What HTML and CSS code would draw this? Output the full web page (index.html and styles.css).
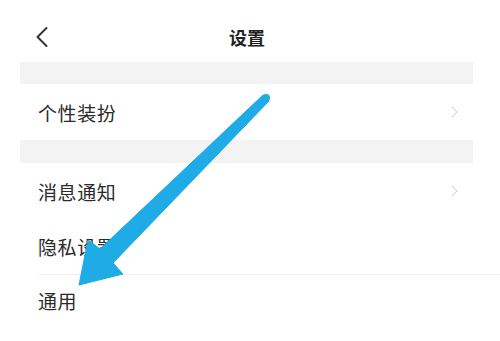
FILE: index.html
```html
<!DOCTYPE html>
<html lang="zh">
<head>
<meta charset="utf-8">
<link rel="stylesheet" href="styles.css">
</head>
<body>
<div class="page">
  <header class="topbar">
    <svg class="back" width="14" height="22" viewBox="0 0 14 22"><path d="M11.5 2 L2.5 11 L11.5 20" fill="none" stroke="#333" stroke-width="2" stroke-linecap="round" stroke-linejoin="round"/></svg>
    <div class="title">设置</div>
  </header>
  <div class="band"></div>
  <div class="row"><span class="label">个性装扮</span><span class="chev"></span></div>
  <div class="band"></div>
  <div class="row"><span class="label">消息通知</span><span class="chev"></span></div>
  <div class="row divided"><span class="label">隐私设置</span></div>
  <div class="row last"><span class="label">通用</span></div>
  <svg class="arrow" width="500" height="341" viewBox="0 0 500 341">
    <polygon points="263,95 100,249 88,240 79,285 123,274 113,263 269,101" fill="#1fabe6" stroke="#1fabe6" stroke-width="1" stroke-linejoin="round"/>
    <circle cx="266" cy="98" r="4" fill="#1fabe6"/>
  </svg>
</div>
</body>
</html>
```

FILE: styles.css
```css
html, body {
  margin: 0;
  padding: 0;
  background: #ffffff;
}
.page {
  position: relative;
  width: 500px;
  height: 341px;
  overflow: hidden;
  font-family: "Noto Sans CJK SC", "Noto Sans", sans-serif;
  color: #333333;
}
.topbar {
  position: relative;
  height: 62px;
  display: flex;
  align-items: center;
  justify-content: center;
  padding-top: 12px;
  box-sizing: border-box;
}
.back {
  position: absolute;
  left: 35px;
  top: 26px;
}
.title {
  font-size: 18px;
  font-weight: bold;
  color: #222;
  margin-left: -6px;
}
.band {
  height: 22px;
  margin: 0 27px 0 20px;
  background: #f3f3f3;
}
.band + .row + .band {
  height: 23px;
}
.row {
  height: 56px;
  display: flex;
  align-items: center;
  justify-content: space-between;
  padding: 0 44px 0 38px;
  box-sizing: border-box;
}
.label {
  font-size: 19px;
  color: #2a2a2a;
  letter-spacing: 0.6px;
}
.chev {
  width: 7px;
  height: 7px;
  border-top: 1.5px solid #d6d6d6;
  border-right: 1.5px solid #d6d6d6;
  transform: rotate(45deg);
}
.divided {
  border-bottom: 1px solid #f0f0f0;
  margin-left: 38px;
  padding-left: 0;
}
.last {
  height: 50px;
}
.arrow {
  position: absolute;
  left: 0;
  top: 0;
}
```
